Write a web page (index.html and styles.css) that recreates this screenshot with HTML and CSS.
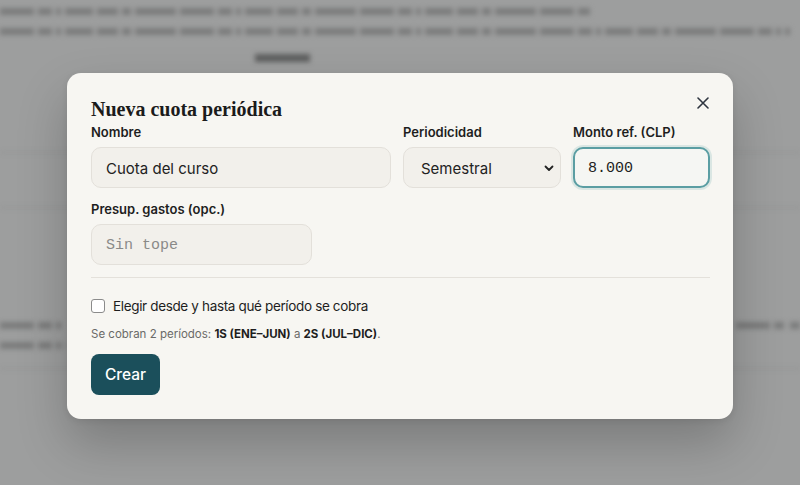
FILE: index.html
```html
<!DOCTYPE html>
<html lang="es">
<head>
<meta charset="utf-8">
<title>Nueva cuota periódica</title>
<link rel="stylesheet" href="styles.css">
</head>
<body>
<div class="page" aria-hidden="true">
  <div class="bar b1"></div>
  <div class="bar b2"></div>
  <div class="bar head"></div>
  <div class="bg-row r1"></div>
  <div class="bg-row r2"></div>
  <div class="bg-row r3"></div>
  <div class="bar b3"></div>
  <div class="bar b4"></div>
  <div class="bar b5"></div>
  <div class="bar b6"></div>
</div>
<div class="modal" role="dialog">
  <button class="close" aria-label="Cerrar">
    <svg width="12" height="12" viewBox="0 0 12 12"><path d="M1 1L11 11M11 1L1 11" stroke="#2f3540" stroke-width="1.6" stroke-linecap="round"/></svg>
  </button>
  <h2 class="title">Nueva cuota periódica</h2>
  <div class="grid">
    <label class="field">
      <span class="label">Nombre</span>
      <input class="input" type="text" value="Cuota del curso">
    </label>
    <label class="field">
      <span class="label">Periodicidad</span>
      <span class="select">Semestral
        <svg class="chev" width="10" height="7" viewBox="0 0 10 7"><path d="M1.5 1.5L5 5L8.5 1.5" fill="none" stroke="#222" stroke-width="1.8" stroke-linecap="round" stroke-linejoin="round"/></svg>
      </span>
    </label>
    <label class="field">
      <span class="label">Monto ref. (CLP)</span>
      <input class="input mono focus" type="text" value="8.000">
    </label>
  </div>
  <label class="field second">
    <span class="label">Presup. gastos (opc.)</span>
    <input class="input mono" type="text" placeholder="Sin tope">
  </label>
  <hr class="divider">
  <label class="check">
    <span class="box"></span>
    <span>Elegir desde y hasta qué período se cobra</span>
  </label>
  <p class="hint">Se cobran 2 períodos: <b>1S (ENE–JUN)</b> a <b>2S (JUL–DIC)</b>.</p>
  <button class="btn">Crear</button>
</div>
</body>
</html>
```
FILE: styles.css
```css
html, body {
  margin: 0;
  padding: 0;
  width: 800px;
  height: 485px;
  overflow: hidden;
  background: #9d9e9e;
  font-family: "Inter", "Liberation Sans", sans-serif;
}
.page {
  position: absolute;
  inset: 0;
  filter: blur(2.4px);
}
.bar {
  position: absolute;
  height: 7px;
  background: repeating-linear-gradient(90deg,
    #7b7c7c 0 34px, transparent 34px 38px,
    #7b7c7c 38px 52px, transparent 52px 56px,
    #7b7c7c 56px 61px, transparent 61px 65px,
    #7b7c7c 65px 93px, transparent 93px 97px,
    #7b7c7c 97px 118px, transparent 118px 122px,
    #7b7c7c 122px 131px, transparent 131px 135px,
    #7b7c7c 135px 176px, transparent 176px 180px);
}
.b1 { left: 0; top: 8px; width: 590px; }
.b2 { left: 0; top: 28px; width: 790px; }
.head {
  left: 255px;
  top: 54px;
  width: 55px;
  height: 8px;
  background: #5e5f5f;
}
.b3 { left: 0; top: 322px; width: 62px; }
.b4 { left: 0; top: 342px; width: 66px; }
.b5 { left: 736px; top: 322px; width: 48px; }
.b6 { left: 790px; top: 322px; width: 10px; }
.bg-row {
  position: absolute;
  left: 0;
  right: 0;
  height: 1px;
  background: #8f9090;
}
.r1 { top: 152px; }
.r2 { top: 207px; }
.r3 { top: 368px; }
.modal {
  position: absolute;
  left: 67px;
  top: 73px;
  width: 666px;
  height: 346px;
  box-sizing: border-box;
  padding: 24px 23px 23px 24px;
  background: #f7f6f2;
  border-radius: 14px;
  box-shadow: 0 24px 50px rgba(0,0,0,0.22), 0 2px 6px rgba(0,0,0,0.08);
  display: flex;
  flex-direction: column;
}
.close {
  position: absolute;
  right: 23px;
  top: 23px;
  width: 14px;
  height: 14px;
  padding: 0;
  border: 0;
  background: none;
  display: flex;
  align-items: center;
  justify-content: center;
}
.title {
  margin: 0 0 2px 0;
  font-family: "Liberation Serif", "DejaVu Serif", serif;
  font-weight: 700;
  font-size: 20px;
  line-height: 24px;
  color: #1b1b1b;
}
.grid {
  display: grid;
  grid-template-columns: 300px 158px 1fr;
  column-gap: 12px;
}
.field {
  display: flex;
  flex-direction: column;
  gap: 6px;
}
.label {
  font-size: 13px;
  font-weight: 600;
  line-height: 18px;
  color: #1e1e1e;
}
.input, .select {
  height: 41px;
  box-sizing: border-box;
  border: 1px solid #e3e0da;
  border-radius: 10px;
  background: #f2f0eb;
  padding: 0 14px;
  font-family: "Inter", "Liberation Sans", sans-serif;
  font-size: 15px;
  color: #222;
  outline: none;
  width: 100%;
}
.input { padding-top: 2px; }
.select {
  display: flex;
  align-items: center;
  justify-content: space-between;
  padding: 2px 6px 0 17px;
}
.mono {
  font-family: "Liberation Mono", "DejaVu Sans Mono", monospace;
  font-size: 15px;
}
.mono::placeholder { color: #8a8a88; }
.focus {
  border: 2px solid #5b9ea3;
  box-shadow: 0 0 0 2px rgba(91,158,163,0.18);
  background: #f5f6f3;
  padding-left: 13px;
}
.second {
  margin-top: 12px;
  width: 221px;
}
.divider {
  margin: 12px 0 0 0;
  border: 0;
  height: 1px;
  background: #e4e1db;
}
.check {
  margin-top: 20px;
  display: flex;
  align-items: center;
  gap: 8px;
  font-size: 13.5px;
  letter-spacing: -0.35px;
  line-height: 16px;
  color: #1e1e1e;
}
.box {
  width: 14px;
  height: 14px;
  box-sizing: border-box;
  border: 1px solid #8b8b8b;
  border-radius: 3px;
  background: #fff;
}
.hint {
  margin: 12px 0 0 0;
  font-size: 11.5px;
  line-height: 16px;
  color: #6a6a68;
}
.hint b { color: #1e1e1e; font-weight: 700; }
.btn {
  margin-top: 12px;
  align-self: flex-start;
  height: 41px;
  padding: 0 14px;
  border: 0;
  border-radius: 8px;
  background: #1b4f5b;
  color: #fff;
  font-family: "Inter", "Liberation Sans", sans-serif;
  font-size: 15.5px;
  font-weight: 500;
}
```
